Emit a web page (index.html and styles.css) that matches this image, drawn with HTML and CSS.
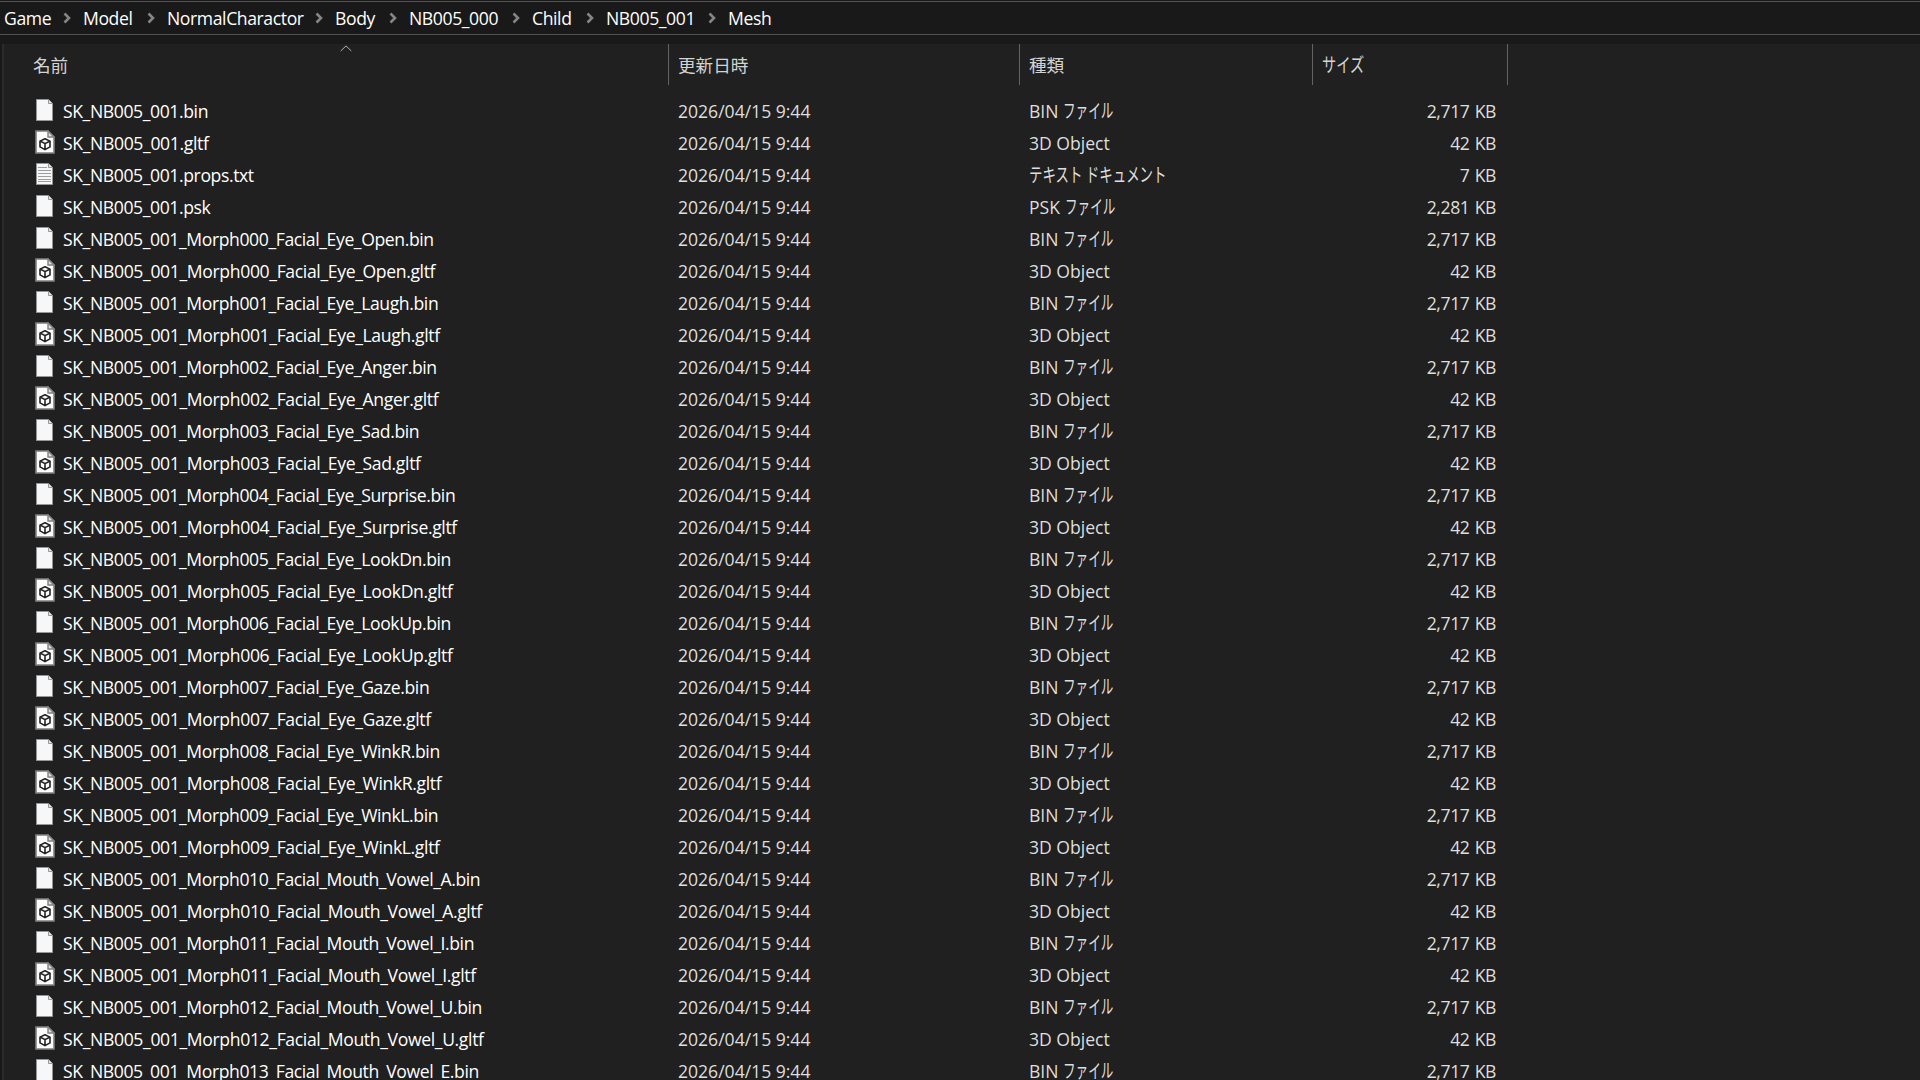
FILE: index.html
```html
<!DOCTYPE html>
<html lang="ja">
<head>
<meta charset="utf-8">
<title>Mesh</title>
<link rel="stylesheet" href="styles.css">
</head>
<body>
<svg class="defs" aria-hidden="true">
  <defs>
    <symbol id="file" viewBox="0 0 20 24">
      <path d="M1.500 1.500h12l4 4v17h-16z" fill="#f6f7f8" stroke="#969696"/>
      <path d="M13.500 1.500v4h4" fill="#e4e4e4" stroke="#969696"/>
    </symbol>
    <symbol id="text" viewBox="0 0 20 24">
      <path d="M1.500 1.500h12l4 4v17h-16z" fill="#f6f7f8" stroke="#969696"/>
      <path d="M13.500 1.500v4h4" fill="#e4e4e4" stroke="#969696"/>
      <path d="M3 5.500h9M3 8.500h13M3 11.500h13M3 14.500h13M3 17.500h13M3 19.500h13" stroke="#9c9c9c" fill="none"/>
    </symbol>
    <symbol id="model" viewBox="0 0 20 24">
      <path d="M1 1h12l6 6v16H1z" fill="#fbfbfb" stroke="#808080" stroke-width="1.6"/>
      <path d="M13 1v6h6z" fill="#dcdcdc" stroke="#808080" stroke-width="1.4"/>
      <path d="M10 8.700l5 2.400v5.800l-5 2.700-5-2.700v-5.800zM5.500 11.300L10 13.600l4.700-2.300M10 13.600v5.600" fill="none" stroke="#222" stroke-width="1.6" stroke-linejoin="round"/>
    </symbol>
    <symbol id="chev" viewBox="0 0 8 12"><path d="M1.500 1.500L6 6l-4.500 4.500" fill="none" stroke="#858585" stroke-width="2.600"/></symbol>
  </defs>
</svg>
<nav class="path" id="path"></nav>
<main class="pane">
  <div class="row head">
    <div class="cell"><span>名前</span><svg class="sort" viewBox="0 0 12 7"><path d="M.7 6L6 .9 11.300 6" fill="none" stroke="#b0b0b0"/></svg></div>
    <div class="cell">更新日時</div>
    <div class="cell">種類</div>
    <div class="cell"><span class="kana wide">サイズ</span></div>
  </div>
  <div class="list" id="list"></div>
</main>
<script src="list.js"></script>
</body>
</html>
```
FILE: styles.css
```css
* { box-sizing: border-box; }
body {
  margin: 0;
  height: 1080px;
  overflow: hidden;
  display: flex;
  flex-direction: column;
  background: #191919;
  color: #dedede;
  font: 17.6px/32px "Open Sans", "Noto Sans CJK JP", sans-serif;
  white-space: nowrap;
}
.defs { display: none; }
.path {
  flex: none;
  display: grid;
  grid-template-columns: 79px 84px 168px 74px 123px 74px 122px auto;
  height: 34px;
  margin-top: 1px;
  padding-left: 4px;
  border-top: 1px solid #535353;
  border-bottom: 1px solid #535353;
  color: #fff;
  letter-spacing: -0.4px;
}
.crumb { display: flex; align-items: center; justify-content: space-between; padding-right: 12px; }
.crumb svg { width: 8px; height: 12px; }
.pane {
  flex: 1;
  min-height: 0;
  margin: 9px 0 0 2px;
  border-left: 2px solid #2b2b2b;
  background: #202020;
}
.row { display: grid; grid-template-columns: 665px 351px 293px 195px; height: 32px; }
.cell { padding-left: 9px; letter-spacing: -0.02px; }
.head { grid-template-rows: 41px; height: 41px; margin-bottom: 10px; line-height: 42px; }
.head .cell { position: relative; border-right: 1px solid #636363; color: #d4d4d4; }
.head .cell:first-child { padding-left: 29px; }
.sort { position: absolute; left: 336px; top: 1px; width: 12px; height: 7px; }
.name { display: flex; align-items: center; gap: 8px; padding-left: 31px; color: #fff; letter-spacing: -0.4px; }
.name.model { letter-spacing: -0.36px; }
.name svg { width: 20px; height: 24px; margin-bottom: 3px; }
.size { padding-right: 12px; text-align: right; letter-spacing: -0.4px; word-spacing: 1px; }
.kana {
  display: inline-block;
  height: 32px;
  font-size: 19.5px;
  vertical-align: top;
  transform: scaleX(0.645);
  transform-origin: left;
}
.kana.wide { transform: scaleX(0.69); }
.head .kana { height: 41px; transform: scaleX(0.73); }
```
FILE: list.js
```js
const crumbs = ["Game", "Model", "NormalCharactor", "Body", "NB005_000", "Child", "NB005_001", "Mesh"];
document.getElementById("path").innerHTML = crumbs.map((name, i) =>
  `<span class="crumb">${name}${i < crumbs.length - 1 ? '<svg><use href="#chev"/></svg>' : ""}</span>`).join("");

const base = "SK_NB005_001";
const morphs = ["Eye_Open", "Eye_Laugh", "Eye_Anger", "Eye_Sad", "Eye_Surprise", "Eye_LookDn", "Eye_LookUp",
  "Eye_Gaze", "Eye_WinkR", "Eye_WinkL", "Mouth_Vowel_A", "Mouth_Vowel_I", "Mouth_Vowel_U", "Mouth_Vowel_E"];
const kana = (text, extra = "") => `<span class="kana ${extra}">${text}</span>`;
const bin = name => [name + ".bin", "file", "BIN " + kana("ファイル"), "2,717 KB"];
const gltf = name => [name + ".gltf", "model", "3D Object", "42 KB"];
const files = [
  bin(base),
  gltf(base),
  [base + ".props.txt", "text", kana("テキスト ドキュメント", "wide"), "7 KB"],
  [base + ".psk", "file", "PSK " + kana("ファイル"), "2,281 KB"],
];
morphs.forEach((morph, i) => {
  const name = `${base}_Morph${String(i).padStart(3, "0")}_Facial_${morph}`;
  files.push(bin(name));
  if (i < morphs.length - 1) files.push(gltf(name));
});
document.getElementById("list").innerHTML = files.map(([name, icon, type, size]) => `
  <div class="row">
    <div class="cell name ${icon}"><svg><use href="#${icon}"/></svg><span>${name}</span></div>
    <div class="cell">2026/04/15 9:44</div>
    <div class="cell">${type}</div>
    <div class="cell size">${size}</div>
  </div>`).join("");
```
